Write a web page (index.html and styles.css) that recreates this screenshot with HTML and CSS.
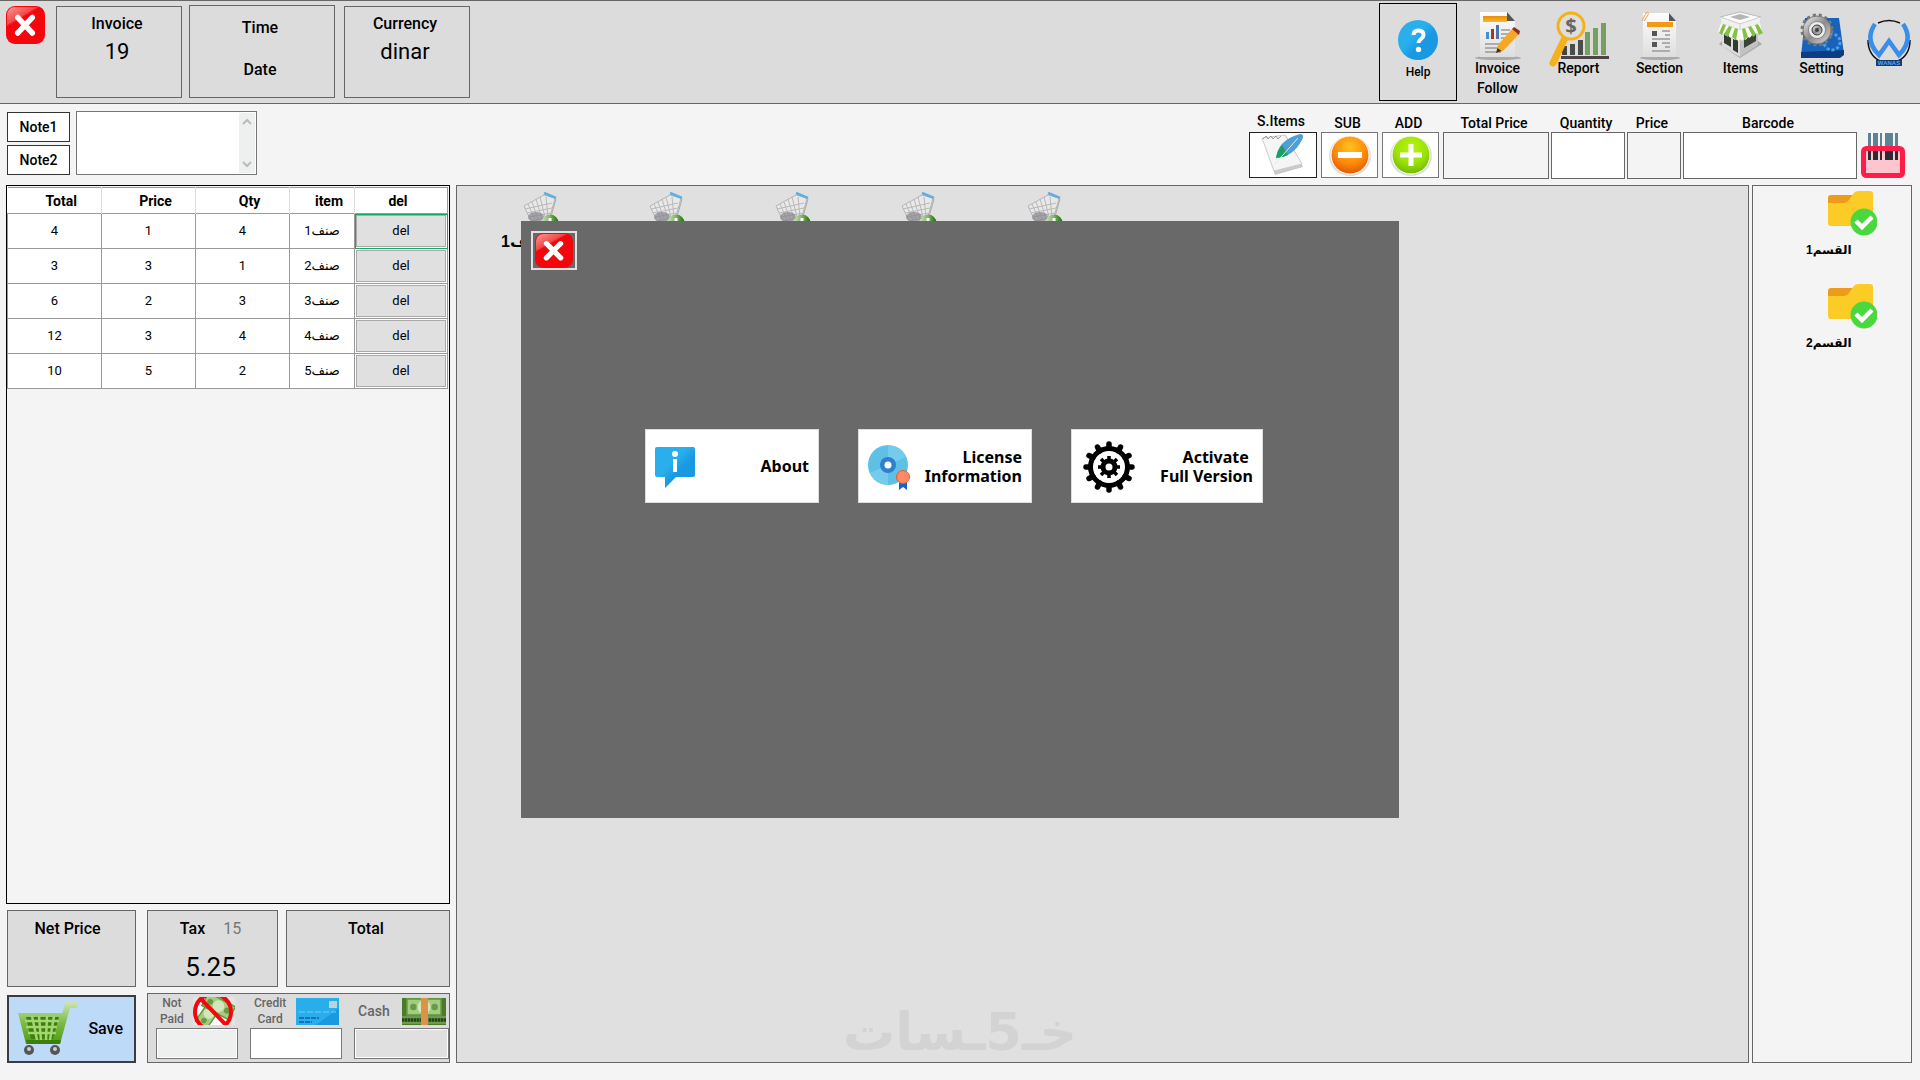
FILE: index.html
```html
<!DOCTYPE html>
<html lang="en">
<head>
<meta charset="utf-8">
<title>Invoice</title>
<link rel="stylesheet" href="styles.css">
</head>
<body>
<svg class="defs" aria-hidden="true">
  <defs>
    <linearGradient id="red" x1="0" y1="0" x2="1" y2="1"><stop offset="0" stop-color="#ff9a94"/><stop offset=".4" stop-color="#f0494a"/><stop offset=".45" stop-color="#f5060c"/><stop offset="1" stop-color="#f5060c"/></linearGradient>
    <linearGradient id="blue" x1="0" y1="0" x2="1" y2="1"><stop offset=".4" stop-color="#29b0ec"/><stop offset=".6" stop-color="#1899e2"/></linearGradient>
    <linearGradient id="paper" x1="0" y1="0" x2="0" y2="1"><stop offset="0" stop-color="#fdfdfd"/><stop offset="1" stop-color="#dedede"/></linearGradient>
    <linearGradient id="gold" x1="0" y1="0" x2="0" y2="1"><stop offset="0" stop-color="#e58d0d"/><stop offset="1" stop-color="#fbb827"/></linearGradient>
    <linearGradient id="leaf" x1="0" y1="0" x2="0" y2="1"><stop offset="0" stop-color="#cfe5b0"/><stop offset=".5" stop-color="#7cbb45"/><stop offset="1" stop-color="#4f9a16"/></linearGradient>
    <linearGradient id="steel" x1="0" y1="0" x2="1" y2="1"><stop offset="0" stop-color="#f4f4f4"/><stop offset=".5" stop-color="#8b8b8b"/><stop offset="1" stop-color="#d8d8d8"/></linearGradient>
    <radialGradient id="orange" cx=".5" cy=".3" r=".7"><stop offset="0" stop-color="#ffc21f"/><stop offset=".6" stop-color="#ff8a0a"/><stop offset="1" stop-color="#e05a00"/></radialGradient>
    <radialGradient id="lime" cx=".5" cy=".3" r=".7"><stop offset="0" stop-color="#b9f40c"/><stop offset=".6" stop-color="#9ae208"/><stop offset="1" stop-color="#74b800"/></radialGradient>
    <linearGradient id="green" x1="0" y1="0" x2="1" y2="0"><stop offset="0" stop-color="#cfe3c2"/><stop offset=".5" stop-color="#7fb266"/><stop offset="1" stop-color="#1d6d05"/></linearGradient>
  </defs>
  <symbol id="close" viewBox="0 0 40 38" preserveAspectRatio="none">
    <rect x="0" y="0" width="40" height="38" rx="9" fill="#f5060c"/>
    <path d="M1 23V9a8 8 0 0 1 8-8h22q8 0 8 6Q27 6 19 13 12 20 1 23z" fill="url(#red)"/>
    <path d="M12 11.500 27 27M27 11.500 12 27" stroke="#fff" stroke-width="5.500" stroke-linecap="round"/>
  </symbol>
  <symbol id="cart-add" viewBox="0 0 36 42">
    <path d="M1 16 21 5 32 8 27 27 8 31z" fill="#e8e8e8" stroke="#b5b5b5"/>
    <path d="M2 19l27-6M4 23l25-5M6 27l22-4M5 14l7 16M9 12l6 17M13 9l6 20M17 7l5 20M23 7l2 20" stroke="#b9b9b9" fill="none"/>
    <ellipse cx="13" cy="27" rx="8" ry="5" fill="#85858c" opacity=".7"/>
    <path d="M21 3 33 8" stroke="#62aee0" stroke-width="2.500"/>
    <path d="M33 9 27 30 6 36" fill="none" stroke="#aaa"/>
    <circle cx="8" cy="37" r="2.500" fill="#888"/><circle cx="20" cy="38" r="2.500" fill="#777"/>
    <circle cx="27" cy="33" r="8.500" fill="url(#green)"/>
    <path d="M27 28v10M22 33h10" stroke="#fff" stroke-width="3"/>
  </symbol>
  <symbol id="folder" viewBox="0 0 50 45">
    <path d="M1 7q0-3 3-3h22l-2 10H1z" fill="#ee9b1c"/>
    <path d="M1 12h16q3 0 5-3l4-6q2-3 5-3h12q3 0 3 3v29q0 3-3 3H4q-3 0-3-3z" fill="#facc25"/>
    <circle cx="37" cy="31" r="13.500" fill="#4bd83e"/>
    <path d="m29 30 6 6 10-10" fill="none" stroke="#fff" stroke-width="4.500"/>
  </symbol>
  <symbol id="note" viewBox="0 0 44 22">
    <path d="M0 0h44v22H0z" fill="#5f9440"/><path d="M2 2h40v18H2z" fill="#a3cc80"/>
    <circle cx="22" cy="11" r="8" fill="#d2e8bb"/><circle cx="9" cy="11" r="4" fill="#659c45"/><circle cx="35" cy="11" r="4" fill="#659c45"/>
  </symbol>
</svg>

<header class="topbar">
  <button class="close-app" aria-label="Close"><svg><use href="#close"/></svg></button>
  <section class="info-box"><span>Invoice</span><strong>19</strong></section>
  <section class="info-box clock"><span>Time</span><span>Date</span></section>
  <section class="info-box"><span>Currency</span><strong>dinar</strong></section>
  <nav class="tools">
    <button class="help">
      <svg width="42" height="42" viewBox="0 0 42 42"><circle cx="21" cy="21" r="20" fill="url(#blue)"/><path d="M16.500 16q0-4.500 5-4.500t5 4.500q0 2-2.500 4t-2.500 4" fill="none" stroke="#fff" stroke-width="4"/><circle cx="21.500" cy="30.500" r="2.700" fill="#fff"/></svg>
      <span>Help</span>
    </button>
    <button class="tool">
      <svg width="48" height="50" viewBox="0 0 48 50"><ellipse cx="24" cy="47" rx="23" ry="2" fill="#aaa"/><path d="M6 1h27l8 9v36H6z" fill="url(#paper)"/><path d="M33 1l8 9h-8z" fill="#555"/><path d="M9 5h24v6H9z" fill="url(#gold)"/><path d="M12 21h3v7h-3z" fill="#3e92d4"/><path d="M17 18h3v10h-3z" fill="#b5301c"/><path d="M22 14h3v14h-3z" fill="#4675b4"/><path d="M27 19h9M27 23h8M27 27h6M11 33h18M11 37h13M11 41h16" stroke="#999" stroke-width="1.500"/><path d="M38 18l7 5-16 17-7 2 2-8z" fill="#f7a823"/><path d="M38 18l2-2 6 4-1 4z" fill="#8d2f18"/><path d="M22 42l1.500-5 4 3z" fill="#333"/></svg>
      <span>Invoice<br>Follow</span>
    </button>
    <button class="tool report">
      <svg width="62" height="58" viewBox="0 0 62 58"><path d="M14 44h5v-9h-5z" fill="#444"/><path d="M22 44h5V33h-5zM30 44h5V29h-5z" fill="#4b4b4b"/><path d="M37 44h5V21h-5zM45 44h5V17h-5zM53 44h5V12h-5z" fill="#76a060"/><path d="M13 45h48v3H13z" fill="#4d4348"/><path d="M17 27 5 52" stroke="#f6b01a" stroke-width="7" stroke-linecap="round"/><circle cx="23" cy="15" r="13" fill="#dedede" stroke="#f6b01a" stroke-width="3"/><text x="23" y="22" text-anchor="middle" class="dollar">$</text></svg>
      <span>Report</span>
    </button>
    <button class="tool">
      <svg width="42" height="50" viewBox="0 0 42 50"><ellipse cx="21" cy="47" rx="20" ry="2" fill="#aaa"/><path d="M4 2h26l7 8v36H4z" fill="url(#paper)"/><path d="M30 2l7 8h-7z" fill="#555"/><path d="M8 11h26v5H8z" fill="#f29a17"/><path d="M3 10 7 2q3-2 2 2L5 10" fill="none" stroke="#eaa14e"/><path d="M13 20h5v5h-5zM13 31h5v5h-5z" fill="#555"/><path d="M23 20h8M26 24h5M13 28h18M23 32h8M26 36h5M13 40h18" stroke="#999" stroke-width="1.500"/></svg>
      <span>Section</span>
    </button>
    <button class="tool">
      <svg width="48" height="50" viewBox="0 0 48 50"><path d="M2 33l21 14 22-14-4-3H5z" fill="#a9a9a9"/><path d="M5 17l18 9v20L5 35z" fill="#dcdcdc"/><path d="M23 26l18-9v17L23 46z" fill="#c2c2c2"/><path d="M7 22l7 3v11l-7-4zM16 27l5 2v13l-5-3z" fill="#333a30"/><path d="M27 28l12-6v8l-12 7z" fill="#3c4438"/><path d="M3 6 23 1l21 5-21 7z" fill="#fafafa" stroke="#bbb"/><path d="M13 6l10-3 10 3-10 3z" fill="#b5b5b5"/><path d="M3 6l20 7v6L4 12zM44 6l-21 7v6l20-7z" fill="#f0f0f0" stroke="#ccc" stroke-width=".5"/><path d="M4 12l19 7v9q-2 3-4 0-2 2-4-2-2 2-4-2-3 2-4-2-3 2-6-1z" fill="#f8fbf4"/><path d="M43 12l-20 7v9q2 3 4 0 2 2 4-2 2 2 4-2 3 2 4-2 3 2 6-1z" fill="#f8fbf4"/><path d="M6 13l3 1-4 10-3-2zM12 15l3 1-4 10-4-3zM18 17l3 1-2 11-4-3zM41 13l-3 1 4 10 4-2zM34 15l-3 1 5 10 3-3zM28 17l-3 1 2 11 4-3z" fill="#84c043"/></svg>
      <span>Items</span>
    </button>
    <button class="tool">
      <svg width="48" height="50" viewBox="0 0 48 50"><path d="M7 7h34l5 36-43 2z" fill="#1762bd"/><path d="M3 41l43-2v5l-4 3H3z" fill="#0d3c85"/><circle cx="34" cy="31" r="8" fill="none" stroke="#4f9be5" stroke-width="3" stroke-dasharray="3 2"/><circle cx="19" cy="19" r="15" fill="none" stroke="#777" stroke-width="3" stroke-dasharray="3 3"/><circle cx="19" cy="19" r="14" fill="url(#steel)" stroke="#777"/><circle cx="19" cy="19" r="9" fill="#888"/><circle cx="19" cy="19" r="8" fill="#eee"/><circle cx="19" cy="19" r="5" fill="url(#steel)" stroke="#333"/><circle cx="19" cy="19" r="2" fill="#444"/></svg>
      <span>Setting</span>
    </button>
    <svg class="logo" width="46" height="48" viewBox="0 0 46 48"><path d="M12 4q11-5 22 0M2 21q0 15 12 21M44 21q0 15-12 21" fill="none" stroke="#111" stroke-width="1.500"/><path d="M9 5Q-2 21 13 36L23 22l10 14Q48 21 37 5" fill="none" stroke="#3a8eea" stroke-width="4.500"/><path d="M10 41h26v6H10z" fill="#163c6c"/><text x="23" y="46" text-anchor="middle" class="brand">WANAS</text></svg>
  </nav>
</header>

<section class="entry">
  <div class="notes">
    <div class="note-tabs"><button>Note1</button><button>Note2</button></div>
    <div class="note-field">
      <textarea aria-label="Note"></textarea>
      <svg width="16" height="60" viewBox="0 0 16 60"><path d="M0 0h16v60H0z" fill="#eeefef"/><path d="m4 11 4-4 4 4M4 49l4 4 4-4" fill="none" stroke="#bbb" stroke-width="2"/></svg>
    </div>
  </div>
  <div class="fields">
    <label class="field s-items"><span>S.Items</span>
      <button><svg width="46" height="42" viewBox="0 0 46 42"><path d="M3 5 26 1l17 32-28 8z" fill="#c9c9c9"/><path d="M2 4 25 1l17 29-28 7z" fill="#f5f5f5" stroke="#ccc"/><path d="M3 5l3-3 2 3 3-3 2 3 3-3 2 3 3-3" fill="none" stroke="#999"/><path d="M16 26Q17 6 40 0q5 0 2 6-9 17-26 18z" fill="#4f9fd4"/><path d="M16 26q0-8 6-15l6 10q-6 3-12 3z" fill="#1b9e60"/><path d="M15 30 38 4" stroke="#d7edf5"/></svg></button>
    </label>
    <label class="field"><span>SUB</span>
      <button><svg width="46" height="42" viewBox="0 0 46 42"><ellipse cx="23" cy="22" rx="21" ry="20" fill="#ddd"/><circle cx="23" cy="21" r="19" fill="url(#orange)" stroke="#fff"/><path d="M11 21h24" stroke="#fff" stroke-width="6"/></svg></button>
    </label>
    <label class="field"><span>ADD</span>
      <button><svg width="46" height="42" viewBox="0 0 46 42"><ellipse cx="23" cy="22" rx="21" ry="20" fill="#ddd"/><circle cx="23" cy="21" r="19" fill="url(#lime)" stroke="#fff"/><path d="M12 21h22M23 10v22" stroke="#fff" stroke-width="5"/></svg></button>
    </label>
    <div class="amounts">
      <label class="field total-price"><span>Total Price</span><input readonly></label>
      <label class="field quantity"><span>Quantity</span><input></label>
      <label class="field price"><span>Price</span><input readonly></label>
      <label class="field barcode"><span>Barcode</span><input></label>
    </div>
    <svg class="scan" width="44" height="46" viewBox="0 0 44 46"><path d="M7 0h3v18H7zM12 0h5v18h-5zM19 0h2v18h-2zM24 0h8v18h-8zM34 0h3v18h-3z" fill="#5e8494"/><rect x="2.500" y="15.500" width="39" height="27" rx="3" fill="#ffc5ce" stroke="#ff1c48" stroke-width="5"/><path d="M7 18h3v9H7zM12 18h5v9h-5zM19 18h2v9h-2zM24 18h8v9h-8zM34 18h3v9h-3z" fill="#2b2b33"/></svg>
  </div>
</section>

<main class="workspace">
  <section class="sale">
    <div class="lines">
      <table>
        <colgroup><col class="c-num"><col class="c-num"><col class="c-num"><col class="c-item"><col></colgroup>
        <thead><tr><th>Total</th><th>Price</th><th>Qty</th><th>item</th><th class="h-del">del</th></tr></thead>
        <tbody>
          <tr><td>4</td><td>1</td><td>4</td><td dir="rtl">صنف1</td><td class="del current"><button>del</button></td></tr>
          <tr><td>3</td><td>3</td><td>1</td><td dir="rtl">صنف2</td><td class="del"><button>del</button></td></tr>
          <tr><td>6</td><td>2</td><td>3</td><td dir="rtl">صنف3</td><td class="del"><button>del</button></td></tr>
          <tr><td>12</td><td>3</td><td>4</td><td dir="rtl">صنف4</td><td class="del"><button>del</button></td></tr>
          <tr><td>10</td><td>5</td><td>2</td><td dir="rtl">صنف5</td><td class="del"><button>del</button></td></tr>
        </tbody>
      </table>
    </div>
    <div class="sums">
      <div class="sum net"><span>Net Price</span></div>
      <div class="sum tax"><div><span>Tax</span><em>15</em></div><strong>5.25</strong></div>
      <div class="sum"><span>Total</span></div>
    </div>
    <div class="checkout">
      <button class="save">
        <svg width="60" height="56" viewBox="0 0 60 56"><path d="M1 12h44l4-11h11v6h-7L43 43H9z" fill="url(#leaf)"/><path d="M9 16h33l-6 22H14z" fill="#3b8108"/><path d="M8 20h34M9 26h31M11 32h28M15 15l5 24M22 15l2 24M30 15l-1 24M37 15l-4 24" stroke="#a4d474" stroke-width="2.500"/><path d="M9 39h35l-1 4H10z" fill="#3b8108"/><circle cx="12" cy="49" r="5" fill="#555"/><circle cx="38" cy="49" r="5" fill="#555"/><circle cx="12" cy="48" r="2" fill="#ccc"/><circle cx="38" cy="48" r="2" fill="#ccc"/></svg>
        <span>Save</span>
      </button>
      <div class="pay">
        <label class="method unpaid"><span class="caption"><span>Not<br>Paid</span>
          <svg width="42" height="28" viewBox="0 0 42 28"><path d="M0 0h42v28H0z" fill="#e4e4e4"/><circle cx="20" cy="15" r="18" fill="#fff"/><g transform="rotate(-55 12 22)"><use href="#note" x="4" y="14" width="30" height="16"/></g><g transform="rotate(28 24 10)"><use href="#note" x="9" y="0" width="32" height="17"/></g><circle cx="20" cy="15" r="18" fill="none" stroke="#f5060c" stroke-width="4"/><path d="M7 1 33 28" stroke="#f5060c" stroke-width="4"/></svg></span>
          <input readonly></label>
        <label class="method credit"><span class="caption"><span>Credit<br>Card</span>
          <svg width="43" height="27" viewBox="0 0 43 27"><path d="M0 0h43v27H0z" fill="#27aeeb"/><path d="M20 27 43 10v17z" fill="#1899e2"/><path d="M33 3h8v7h-8z" fill="#b9d5dc"/><path d="M3 14h37" stroke="#73cdf4" stroke-dasharray="6 2"/><path d="M3 20h20M3 24h13" stroke="#1670bd" stroke-width="2" stroke-dasharray="5 1"/></svg></span>
          <input></label>
        <label class="method cash"><span class="caption"><span>Cash</span>
          <svg width="44" height="27" viewBox="0 0 44 27"><path d="M0 0h44v27H0z" fill="#487b2c"/><use href="#note" width="44" height="18" preserveAspectRatio="none"/><path d="M0 19h44M0 25h44" stroke="#90bb70"/><path d="M0 22h44" stroke="#263d1c" stroke-width="3" stroke-dasharray="2 1"/><path d="M19 0h7v27h-7z" fill="#dc9247"/></svg></span>
          <input readonly></label>
      </div>
    </div>
  </section>

  <section class="catalog">
    <div class="products">
      <button class="product"><svg width="36" height="42"><use href="#cart-add"/></svg><span dir="rtl">صنف1</span></button>
      <button class="product" aria-label="2"><svg width="36" height="42"><use href="#cart-add"/></svg></button>
      <button class="product" aria-label="3"><svg width="36" height="42"><use href="#cart-add"/></svg></button>
      <button class="product" aria-label="4"><svg width="36" height="42"><use href="#cart-add"/></svg></button>
      <button class="product" aria-label="5"><svg width="36" height="42"><use href="#cart-add"/></svg></button>
    </div>
  </section>

  <aside class="sections">
    <button><svg width="50" height="45"><use href="#folder"/></svg><span dir="rtl">القسم1</span></button>
    <button><svg width="50" height="45"><use href="#folder"/></svg><span dir="rtl">القسم2</span></button>
  </aside>
</main>

<div class="watermark" dir="rtl">خـ5ـسات</div>

<div class="dialog" role="dialog" aria-label="Help">
  <button class="dialog-close" aria-label="Close"><svg><use href="#close"/></svg></button>
  <div class="choices">
    <button><svg width="40" height="48" viewBox="0 0 40 48"><path d="M0 6q0-2 2-2h36q2 0 2 2v26q0 2-2 2H21L10 45V34H2q-2 0-2-2z" fill="url(#blue)"/><circle cx="20" cy="11" r="3" fill="#fff"/><path d="M20 16v13" stroke="#fff" stroke-width="4"/></svg><span>About</span></button>
    <button><svg width="42" height="46" viewBox="0 0 42 46"><circle cx="20" cy="21" r="20" fill="#5fc0e6"/><path d="M20 1a20 20 0 0 1 18 12L20 21zM20 41A20 20 0 0 1 2 29l18-8z" fill="#82d2ee" opacity=".6"/><circle cx="20" cy="21" r="8" fill="#2f7fd0"/><circle cx="20" cy="21" r="3.500" fill="#fff"/><path d="M31 35h8v11l-4-3-4 3z" fill="#1565ba"/><circle cx="35" cy="33" r="6.500" fill="#ff8a65" stroke="#e65a2e"/></svg><span>License<br>Information</span></button>
    <button class="wide"><svg width="52" height="52" viewBox="0 0 52 52"><circle cx="26" cy="26" r="18.500" fill="none" stroke="#000" stroke-width="5"/><path d="M26 3v4M26 45v4M3 26h4M45 26h4M37.500 6l-2 4M16.500 42l-2 4M14.500 6l2 4M35.500 42l2 4M6 14.500l4 2M42 35.500l4 2M6 37.500l4-2M42 16.500l4-2" stroke="#000" stroke-width="5.500" stroke-linecap="round"/><circle cx="26" cy="26" r="6" fill="none" stroke="#000" stroke-width="5"/><path d="M26 19v-4M26 33v4M19 26h-4M33 26h4M21 21l-3-3M31 31l3 3M31 21l3-3M21 31l-3 3" stroke="#000" stroke-width="3.500"/></svg><span>Activate&nbsp;<br>Full Version</span></button>
  </div>
</div>
</body>
</html>
```
FILE: styles.css
```css
* { box-sizing: border-box; }

body {
  position: relative;
  margin: 0;
  min-height: 100vh;
  display: flex;
  flex-direction: column;
  background: #f4f4f4;
  color: #000;
  font: 500 14px/20px Roboto, "DejaVu Sans", sans-serif;
}

button, input, textarea {
  font: inherit;
  color: inherit;
  margin: 0;
  padding: 0;
  border-radius: 0;
}

button { background: none; border: 0; }
svg { display: block; flex: none; }
.defs { position: absolute; width: 0; height: 0; }

/* Top bar */
.topbar {
  display: flex;
  align-items: flex-start;
  height: 104px;
  padding: 2px 8px 0 5px;
  background: #dcdcdc;
  border-top: 1px solid #666;
  border-bottom: 1px solid #666;
}
.close-app { padding: 3px 1px; }
.close-app svg { width: 39px; height: 38px; }
.info-box {
  display: flex;
  flex-direction: column;
  align-items: center;
  width: 126px;
  height: 92px;
  margin: 3px 9px 0 0;
  padding: 7px 4px 0 0;
  border: 1px solid #666;
  font-size: 16px;
}
.close-app + .info-box { margin-left: 10px; margin-right: 7px; }
.info-box strong { font-size: 22px; font-weight: 400; line-height: 36px; }
.clock { width: 146px; margin-top: 2px; height: 93px; padding-top: 12px; gap: 22px; }

.tools { display: flex; margin-left: auto; }
.help {
  display: flex;
  flex-direction: column;
  align-items: center;
  width: 78px;
  height: 98px;
  padding-top: 15px;
  border: 1px solid #000;
  font-size: 12px;
  gap: 1px;
}
.tool {
  display: flex;
  flex-direction: column;
  align-items: center;
  width: 81px;
  padding-top: 8px;
}
.tool span { margin-top: -3px; }
.report span { margin-top: -11px; }
.dollar { font: 700 20px "Open Sans", sans-serif; fill: #666; }
.brand { font: 700 6px "Liberation Sans", sans-serif; fill: #5aa5f5; }
.logo { margin: 16px 0 0 4px; }

/* Entry row */
.entry {
  display: flex;
  justify-content: space-between;
  height: 81px;
  padding: 7px 15px 0 7px;
}
.notes { display: flex; gap: 6px; }
.note-tabs { display: flex; flex-direction: column; gap: 3px; padding-top: 1px; }
.note-tabs button { width: 63px; height: 30px; background: #fff; border: 1px solid #333; }
.note-field { display: flex; width: 181px; height: 64px; padding: 1px; background: #fff; border: 1px solid #777; }
.note-field textarea { flex: 1; min-width: 0; border: 0; resize: none; }

.fields { display: flex; gap: 4px; }
.amounts { display: flex; gap: 2px; }
.field { display: flex; flex-direction: column; width: 57px; text-align: center; }
.field span { height: 21px; padding-right: 4px; line-height: 24px; }
.field input { width: 100%; height: 47px; border: 1px solid #666; background: #fff; }
.field input:read-only { background: #f4f4f4; }
.field button { display: flex; justify-content: center; align-items: center; height: 46px; background: #fff; border: 1px solid #777; }
.s-items { width: 68px; }
.s-items button { border-color: #222; }
.s-items span { line-height: 20px; }
.total-price { width: 106px; }
.quantity { width: 74px; }
.price { width: 54px; }
.barcode { width: 174px; }
.scan { margin-top: 22px; }

/* Workspace */
.workspace { flex: 1; display: flex; gap: 3px; padding: 0 8px 17px 6px; }
.sale { display: flex; flex-direction: column; gap: 6px; width: 444px; margin-right: 3px; }
.lines { flex: 1; padding: 1px 1px 1px 0; border: 1px solid #000; }
table { width: 100%; border-collapse: collapse; table-layout: fixed; background: #fff; }
.c-num { width: 94px; }
.c-item { width: 65px; }
th { height: 26px; padding: 0 0 0 14px; font-weight: 700; border-right: 1px solid #ddd; }
thead { border-top: 1px solid #999; }
.h-del { padding: 0 6px 0 0; border-right-color: #999; }
td { height: 35px; padding: 0; font-size: 13px; font-weight: 400; text-align: center; border: 1px solid #999; }
.del { padding: 1px; }
.del button { display: block; width: 100%; height: 32px; background: #e0e0e0; border: 1px solid #aaa; }
.current { outline: 1px solid #14a765; outline-offset: -1px; }

.sums { display: flex; padding-left: 1px; }
.sum {
  display: flex;
  flex-direction: column;
  align-items: center;
  flex: 1;
  height: 77px;
  padding: 8px 4px 0 0;
  background: #dcdcdc;
  border: 1px solid #666;
  font-size: 16px;
}
.net { flex: none; width: 129px; margin-right: 11px; padding-right: 8px; }
.tax { flex: none; width: 131px; margin-right: 8px; }
.tax div { display: flex; gap: 18px; }
.tax em { font-style: normal; font-weight: 400; color: #777; }
.tax strong { font-size: 26px; font-weight: 400; line-height: 56px; }

.checkout { display: flex; align-items: flex-end; gap: 11px; padding-left: 1px; }
.save {
  display: flex;
  align-items: center;
  justify-content: space-between;
  width: 129px;
  height: 68px;
  padding: 0 11px 0 8px;
  background: #bddaf9;
  border: 2px solid #3b3b42;
  font-size: 16px;
}
.pay {
  display: flex;
  flex: 1;
  justify-content: space-between;
  height: 70px;
  padding: 3px 0 0 8px;
  background: #dcdcdc;
  border: 1px solid #666;
}
.method { display: flex; flex-direction: column; gap: 3px; width: 92px; color: #666; }
.caption { display: flex; align-items: center; justify-content: space-between; height: 28px; padding: 0 3px 0 4px; font-size: 12px; line-height: 16px; text-align: center; }
.method input { height: 31px; width: 100%; border: 1px solid #777; background: #fff; box-shadow: inset 0 0 0 1px #fff; }
.unpaid { width: 82px; }
.unpaid input { background: #eeefef; }
.cash { width: 95px; }
.cash .caption { font-size: 14px; }
.cash input { background: #e0e0e0; }

.catalog {
  flex: 1;
  padding: 4px 0 0 5px;
  background: #e0e0e0;
  border: 1px solid #666;
}
.products { display: flex; }
.product { display: flex; flex-direction: column; align-items: center; width: 126px; padding-left: 31px; }
.product span { align-self: flex-start; padding-left: 8px; font-family: "Liberation Sans", "DejaVu Sans", sans-serif; font-weight: 700; font-size: 16px; }

.sections {
  display: flex;
  flex-direction: column;
  gap: 24px;
  width: 160px;
  padding: 5px 34px 0 53px;
  border: 1px solid #666;
}
.sections button { display: flex; flex-direction: column; align-items: flex-end; gap: 4px; }
.sections span { align-self: flex-start; font-family: "Liberation Sans", "DejaVu Sans", sans-serif; font-weight: 700; font-size: 12px; }

/* Seller's mark over the page foot */
.watermark {
  position: absolute;
  bottom: 16px;
  left: 50%;
  transform: translateX(-50%);
  color: #d3d3d3;
  font: 700 52px/64px "DejaVu Sans", sans-serif;
}

/* Help dialog */
.dialog {
  position: absolute;
  top: 221px;
  left: 50%;
  margin-left: -439px;
  width: 878px;
  padding: 10px 10px 315px;
  background: #696969;
}
.dialog-close { display: block; width: 46px; height: 39px; padding: 0 2px; border: 2px solid #e0e0e0; }
.dialog-close svg { width: 38px; height: 35px; }
.choices { display: flex; gap: 39px; padding: 159px 0 0 114px; }
.choices button {
  display: flex;
  align-items: center;
  justify-content: space-between;
  width: 174px;
  height: 74px;
  padding: 1px 9px 0;
  background: #fff;
  border: 1px solid #ddd;
  font: 700 16px/19px "Noto Sans", sans-serif;
  text-align: right;
}
.choices .wide { width: 192px; padding-left: 11px; }
```
